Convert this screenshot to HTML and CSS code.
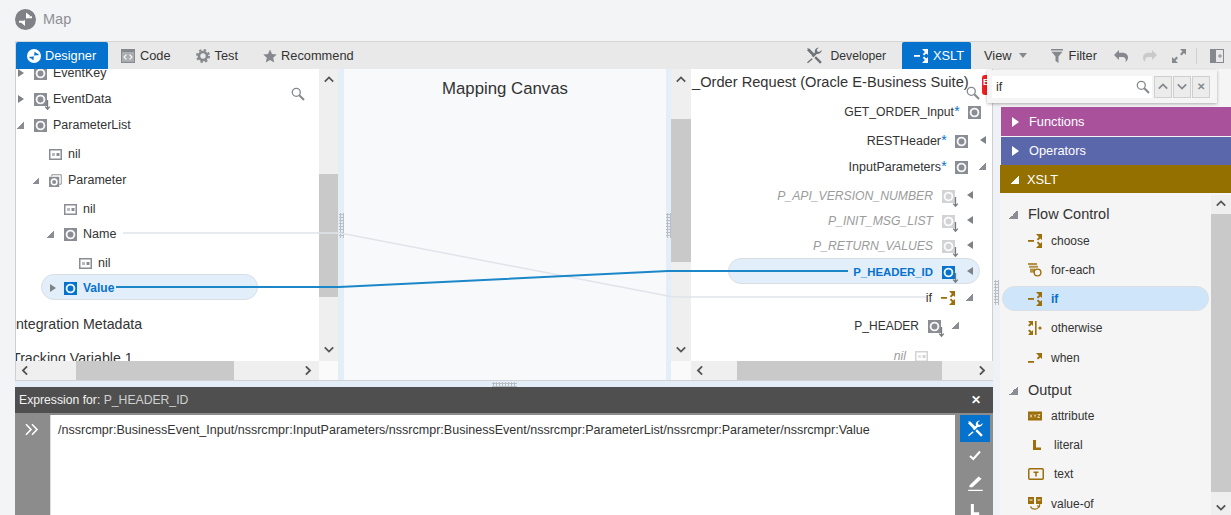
FILE: index.html
```html
<!DOCTYPE html>
<html lang="en">
<head>
<meta charset="utf-8">
<title>Map</title>
<link rel="stylesheet" href="styles.css">
</head>
<body>
<svg class="defs" width="0" height="0" aria-hidden="true">
  <symbol id="node" viewBox="0 0 13 13"><rect width="13" height="13" fill="currentColor"/><circle cx="6.5" cy="6.5" r="3.9" fill="none" stroke="#fff" stroke-width="1.9" opacity=".92"/></symbol>
  <symbol id="node-down" viewBox="0 0 18 19"><rect width="13" height="13" fill="currentColor"/><circle cx="6.5" cy="6.5" r="3.9" fill="none" stroke="#fff" stroke-width="1.9" opacity=".92"/><path d="M13.5 7v9M11.2 13.6l2.3 2.6 2.3-2.6" fill="none" stroke="#777b80" stroke-width="1.3"/></symbol>
  <symbol id="nil" viewBox="0 0 13 13"><rect x=".75" y="1.75" width="11.5" height="9.5" fill="#fff" stroke="currentColor" stroke-width="1.5"/><rect x="3" y="5" width="3" height="3" fill="currentColor" opacity=".6"/><rect x="7.5" y="5" width="3" height="3" fill="currentColor"/></symbol>
  <symbol id="param" viewBox="0 0 14 14"><path d="M3 2.5V.8h10.2V11H11" fill="none" stroke="#8a8d93"/><rect y="3" width="11" height="11" fill="#8a8d93"/><circle cx="5.5" cy="8.5" r="3" fill="none" stroke="#fff" stroke-width="1.7"/></symbol>
  <symbol id="cond" viewBox="0 0 14 14"><path d="M0 6h6v1.8H0z"/><path d="M8 0h6v6l-1.7-1.6-2.2 2.1-1.3-1.3 2.1-2.1z"/><path d="M8 14h6V8l-1.7 1.6-2.2-2.1-1.3 1.3 2.1 2.1z"/></symbol>
  <symbol id="when" viewBox="0 0 14 14"><path d="M0 10h6v1.8H0z"/><path d="M8 2h6v6l-1.7-1.6-2.2 2.1-1.3-1.3 2.1-2.1z"/></symbol>
  <symbol id="otherwise" viewBox="0 0 14 14"><path d="M0 0h5v5L3.6 3.6 1.6 5.6 0 4.2l2-2zM0 14h5V9L3.6 10.4 1.6 8.4 0 9.8l2 2z"/><path d="M7 0h1.6v14H7z"/><circle cx="12" cy="7" r="1.6"/></symbol>
  <symbol id="foreach" viewBox="0 0 14 14"><path d="M0 0h9v2H0zM1 2.8h9v2H1z" opacity=".75"/><path d="M2 5.6h5v4H2z" opacity=".75"/><circle cx="9.5" cy="9.5" r="3.4" fill="none" stroke="currentColor" stroke-width="1.4"/></symbol>
  <symbol id="xyz" viewBox="0 0 14 9"><rect width="14" height="9"/><path d="M2 3l2 3M4 3L2 6M6 3l1 1.5L8 3M7 4.5V6M9.6 3H12L9.6 6H12" fill="none" stroke="#f0e6c8" stroke-width=".8"/></symbol>
  <symbol id="literal" viewBox="0 0 8 10"><path d="M0 0h3v7.400h5V10H0z"/></symbol>
  <symbol id="textbox" viewBox="0 0 16 12"><rect x=".75" y=".75" width="14.5" height="10.500" rx="1" fill="none" stroke="currentColor" stroke-width="1.500"/><path d="M5.500 3.500h5V5H8.800v3.500H7.200V5H5.500z"/></symbol>
  <symbol id="valueof" viewBox="0 0 14 14"><path d="M0 0h6v7H0zM8 0h6v7H8z"/><path d="M1.500 3h3M9.500 3h3" stroke="#f5f5f5" stroke-width="1.200"/><path d="M2.500 9.500c1.500 3.500 6.500 3.500 8.500.5M9 8.800l2.400.8.400-2.400" fill="none" stroke="currentColor" stroke-width="1.200"/></symbol>
  <symbol id="chev" viewBox="0 0 10 7"><path d="M.8 5.600 5 1.400l4.200 4.200" fill="none" stroke="currentColor" stroke-width="1.800"/></symbol>
  <symbol id="glass" viewBox="0 0 14 14"><circle cx="5.300" cy="5.300" r="4" fill="#fff" stroke="currentColor" stroke-width="1.300"/><path d="M8.300 8.300l4.700 4.700" stroke="currentColor" stroke-width="2"/></symbol>
  <symbol id="tools" viewBox="0 0 17 17"><path d="M1 3.200 3 1.200l5.200 5.200-2 2z"/><path d="M1.500 1.500 3.500 3" stroke="currentColor" stroke-width="1"/><path d="M7.500 10.200 11 6.700c1.800.7 4.500-.6 4.800-3.600l-2.500 2-2-.5-.5-2 2.200-2C9.800.6 8.200 3.500 9 5.400L5.600 8.800z"/><path d="M10 9.300 15.800 15l-1.700 1.700-5.700-5.800zM5.700 11.300 1 15.300l.9.900 4.800-4z"/></symbol>
</svg>

<header class="pagehead">
  <svg class="map-logo" viewBox="0 0 21 21"><circle cx="10.500" cy="10.500" r="10.500" fill="#7f8186"/><path d="M4 12.800h5.500M11.500 8.200h5.500" stroke="#fff" stroke-width="2"/><path d="M11 3.500l4 3-4 3.200zM10 11l-4 2.600 4 3.400z" fill="#fff"/></svg>
  <h1 class="page-title">Map</h1>
</header>

<div class="workspace">
  <nav class="toolbar">
    <a class="tool tab active first"><svg class="tool-ic" viewBox="0 0 14 14"><circle cx="7" cy="7" r="7" fill="#fff"/><path d="M2.500 8.500h4M7.500 5.500h4" stroke="#0572ce" stroke-width="1.400"/><path d="M7.500 2.500l2.600 2.200L7.500 7zM6.500 7 4 9.200l2.500 2.200z" fill="#0572ce"/></svg>Designer</a>
    <a class="tool m-13"><svg class="tool-ic" viewBox="0 0 14 14"><path d="M0 0h14v14H0z" fill="#85888d"/><path d="M1 3h12v10H1z" fill="#f0f0f0" opacity=".35"/><path d="M5.500 5.500 3 8l2.500 2.500M8.500 5.500 11 8l-2.500 2.500" fill="none" stroke="#f4f4f4" stroke-width="1.200"/></svg>Code</a>
    <a class="tool m-25"><svg class="tool-ic" viewBox="0 0 14 14"><circle cx="7" cy="7" r="4" fill="none" stroke="#85888d" stroke-width="2.600"/><circle cx="7" cy="7" r="6" fill="none" stroke="#85888d" stroke-width="2" stroke-dasharray="2.400 2.312"/></svg>Test</a>
    <a class="tool m-25 tight"><svg class="tool-ic" viewBox="0 0 14 14"><path d="M7 .6l2 4.400 4.800.5-3.600 3.200 1 4.700L7 11l-4.200 2.400 1-4.700L.2 5.500 5 5z" fill="#85888d"/></svg>Recommend</a>
    <span class="toolbar-fill"></span>
    <a class="tool dev"><svg class="tool-ic wide" viewBox="0 0 17 17"><use href="#tools" class="ic-dev"/></svg>Developer</a>
    <a class="tool tab active m-16 xslt"><svg class="tool-ic" viewBox="0 0 14 14"><use href="#cond" class="ic-white"/></svg>XSLT</a>
    <a class="tool m-13">View<span class="caret"></span></a>
    <a class="tool m-24"><svg class="tool-ic small" viewBox="0 0 12 14"><path d="M0 0h12v1.600H0zM.5 2.800h11L7.500 7.500V14l-3-2V7.500z" fill="#85888d"/></svg>Filter</a>
    <button class="icon-btn m-17" aria-label="Undo"><svg viewBox="0 0 14 12"><path d="M5 0v2.800h3.500C12 2.800 14 5 14 7.500c0 2-1.200 3.500-2.500 4.500 .6-1.600.6-5-3-5H5v3L0 5z" fill="#85888d"/></svg></button>
    <button class="icon-btn m-15" aria-label="Redo"><svg viewBox="0 0 14 12"><path d="M9 0v2.800H5.500C2 2.800 0 5 0 7.500c0 2 1.200 3.500 2.500 4.500C1.900 10.400 1.900 7 5.500 7H9v3l5-5z" fill="#c9cacc"/></svg></button>
    <button class="icon-btn m-15" aria-label="Expand"><svg viewBox="0 0 14 14"><path d="M8 0h6v6l-2-2-2.500 2.500-1.500-1.500L10.500 2.500zM6 14H0V8l2 2 2.500-2.500L6 9 3.500 11.500z" fill="#85888d"/></svg></button>
    <span class="tool-divider"></span>
    <button class="icon-btn last" aria-label="Panel"><svg viewBox="0 0 14 14"><rect x=".5" y=".5" width="13" height="13" fill="none" stroke="#85888d"/><path d="M1 1h5v12H1z" fill="#85888d"/><path d="M8 7h4M10 5v4" stroke="#85888d"/></svg></button>
  </nav>

  <div class="columns">
    <div class="main-col">
      <div class="panels">
        <section class="panel panel-left">
          <div class="tree-view">
            <ul class="tree left-tree">
              <li class="row l0"><span class="twist right"></span><svg class="ic"><use href="#node"/></svg><span>EventKey</span></li>
              <li class="row l0"><span class="twist right"></span><svg class="ic ic-d"><use href="#node-down"/></svg><span>EventData</span></li>
              <li class="row l0"><span class="twist open"></span><svg class="ic"><use href="#node"/></svg><span>ParameterList</span></li>
              <li class="row l1"><span class="twist"></span><svg class="ic"><use href="#nil"/></svg><span>nil</span></li>
              <li class="row l1"><span class="twist open"></span><svg class="ic"><use href="#param"/></svg><span>Parameter</span></li>
              <li class="row l2"><span class="twist"></span><svg class="ic"><use href="#nil"/></svg><span>nil</span></li>
              <li class="row l2"><span class="twist open"></span><svg class="ic"><use href="#node"/></svg><span>Name</span></li>
              <li class="row l3"><span class="twist"></span><svg class="ic"><use href="#nil"/></svg><span>nil</span></li>
              <li class="row l2 pill-row"><span class="pill-left"><span class="twist right"></span><svg class="ic ic-blue"><use href="#node"/></svg><span class="sel">Value</span></span></li>
              <li class="row section-title">Integration Metadata</li>
              <li class="row section-title">Tracking Variable 1</li>
            </ul>
            <svg class="glass left-glass"><use href="#glass"/></svg>
          </div>
          <div class="vscroll">
            <div class="track t-left-a"><svg class="chev"><use href="#chev"/></svg></div>
            <div class="thumb t-left-b"></div>
            <div class="track t-left-c bottom"><svg class="chev down"><use href="#chev"/></svg></div>
          </div>
          <div class="hscroll">
            <div class="htrack h-left-a"><svg class="chev back"><use href="#chev"/></svg></div>
            <div class="hthumb h-left-b"></div>
            <div class="htrack h-fill end"><svg class="chev fwd"><use href="#chev"/></svg></div>
          </div>
          <div class="corner"></div>
        </section>

        <div class="vsplit"><span class="dots"></span></div>

        <section class="canvas"><h2 class="canvas-title">Mapping Canvas</h2></section>

        <div class="vsplit narrow"><span class="dots"></span></div>

        <section class="panel panel-right">
          <div class="vscroll">
            <div class="track t-right-a"><svg class="chev"><use href="#chev"/></svg></div>
            <div class="thumb t-right-b"></div>
            <div class="track t-right-c bottom"><svg class="chev down"><use href="#chev"/></svg></div>
          </div>
          <div class="tree-view">
            <ul class="tree right-tree">
              <li class="tree-title">_Order Request (Oracle E-Business Suite)</li>
              <li class="rrow r0"><span>GET_ORDER_Input</span><b class="req">*</b><svg class="ic"><use href="#node"/></svg></li>
              <li class="rrow r1"><span>RESTHeader</span><b class="req">*</b><svg class="ic"><use href="#node"/></svg><span class="rtwist left"></span></li>
              <li class="rrow r1"><span>InputParameters</span><b class="req">*</b><svg class="ic"><use href="#node"/></svg><span class="rtwist open"></span></li>
              <li class="rrow r2 muted"><span>P_API_VERSION_NUMBER</span><svg class="ic ic-d"><use href="#node-down"/></svg><span class="rtwist left"></span></li>
              <li class="rrow r2 muted"><span>P_INIT_MSG_LIST</span><svg class="ic ic-d"><use href="#node-down"/></svg><span class="rtwist left"></span></li>
              <li class="rrow r2 muted"><span>P_RETURN_VALUES</span><svg class="ic ic-d"><use href="#node-down"/></svg><span class="rtwist left"></span></li>
              <li class="rrow r2 pill-row"><span class="pill-right"><span class="sel">P_HEADER_ID</span><svg class="ic ic-d ic-blue"><use href="#node-down"/></svg><span class="rtwist left"></span></span></li>
              <li class="rrow r2"><span>if</span><svg class="ic ic-brown"><use href="#cond"/></svg><span class="rtwist open"></span></li>
              <li class="rrow r3"><span>P_HEADER</span><svg class="ic ic-d"><use href="#node-down"/></svg><span class="rtwist open"></span></li>
              <li class="rrow r4 muted"><span>nil</span><svg class="ic"><use href="#nil"/></svg><span class="rtwist"></span></li>
            </ul>
            <svg class="glass right-glass"><use href="#glass"/></svg>
          </div>
          <div class="corner"></div>
          <div class="hscroll">
            <div class="htrack h-right-a"><svg class="chev back"><use href="#chev"/></svg></div>
            <div class="hthumb h-right-b"></div>
            <div class="htrack h-fill end"><svg class="chev fwd"><use href="#chev"/></svg></div>
          </div>
        </section>

        <svg class="links" viewBox="0 0 978 312">
          <path d="M107 164H324L652 227Q656 228 662 228H910" fill="none" stroke="#e0e4ea" stroke-width="1.500"/>
          <path d="M100 218H323L652 202H832" fill="none" stroke="#1b87c9" stroke-width="2"/>
        </svg>
      </div>

      <div class="hsplit"><span class="dots flat"></span></div>

      <section class="expression">
        <header class="expr-head"><span>Expression for: <span class="expr-target">P_HEADER_ID</span></span><button class="expr-close" aria-label="Close">✕</button></header>
        <div class="expr-body">
          <div class="expr-side"><svg class="dbl" viewBox="0 0 14 12"><path d="M1 .8 6 6 1 11.200M7 .8 12 6 7 11.200" fill="none" stroke="#fff" stroke-width="1.600"/></svg></div>
          <div class="expr-editor">/nssrcmpr:BusinessEvent_Input/nssrcmpr:InputParameters/nssrcmpr:BusinessEvent/nssrcmpr:ParameterList/nssrcmpr:Parameter/nssrcmpr:Value</div>
          <div class="expr-tools">
            <button class="expr-tool on" aria-label="Tools"><svg class="et-ic"><use href="#tools"/></svg></button>
            <button class="expr-tool" aria-label="Apply"><svg class="et-ic sm" viewBox="0 0 12 10"><path d="M1 5.500 4.300 8.500 11 1" fill="none" stroke="#fff" stroke-width="2"/></svg></button>
            <button class="expr-tool" aria-label="Edit"><svg class="et-ic" viewBox="0 0 14 14"><path d="M2 9.500 9.500 2 12 4 4.500 11H2zM1 13h12v1H1z" fill="#fff"/></svg></button>
            <button class="expr-tool" aria-label="Literal"><svg class="et-ic sm" viewBox="0 0 8 10"><use href="#literal" class="ic-white"/></svg></button>
          </div>
        </div>
      </section>
    </div>

    <div class="vsplit palette-split"><span class="dots"></span></div>

    <aside class="palette">
      <div class="accordion acc-fn"><span class="acc-right"></span>Functions</div>
      <div class="accordion acc-op"><span class="acc-right"></span>Operators</div>
      <div class="accordion acc-xslt"><span class="acc-open"></span>XSLT</div>
      <div class="palette-body">
        <ul class="palette-list">
          <li class="pal-head"><span class="twist open"></span>Flow Control</li>
          <li class="pal-item"><svg class="pal-ic"><use href="#cond"/></svg>choose</li>
          <li class="pal-item"><svg class="pal-ic"><use href="#foreach"/></svg>for-each</li>
          <li class="pal-item pal-sel"><svg class="pal-ic"><use href="#cond"/></svg>if</li>
          <li class="pal-item"><svg class="pal-ic"><use href="#otherwise"/></svg>otherwise</li>
          <li class="pal-item"><svg class="pal-ic"><use href="#when"/></svg>when</li>
          <li class="pal-head"><span class="twist open"></span>Output</li>
          <li class="pal-item"><svg class="pal-ic"><use href="#xyz"/></svg>attribute</li>
          <li class="pal-item"><svg class="pal-ic literal-ic"><use href="#literal"/></svg>literal</li>
          <li class="pal-item"><svg class="pal-ic text-ic"><use href="#textbox"/></svg>text</li>
          <li class="pal-item"><svg class="pal-ic"><use href="#valueof"/></svg>value-of</li>
        </ul>
        <div class="vscroll pal-scroll">
          <div class="track t-pal-a"><svg class="chev"><use href="#chev"/></svg></div>
          <div class="thumb t-pal-b"></div>
          <div class="track t-pal-c bottom"><svg class="chev down"><use href="#chev"/></svg></div>
        </div>
      </div>
    </aside>
  </div>

  <span class="error-badge">E</span>
  <div class="search-pop">
    <div class="search-input"><span>if</span><svg class="glass-in"><use href="#glass"/></svg></div>
    <button class="search-btn" aria-label="Previous"><svg class="chev"><use href="#chev"/></svg></button>
    <button class="search-btn" aria-label="Next"><svg class="chev down"><use href="#chev"/></svg></button>
    <button class="search-btn close" aria-label="Close">✕</button>
  </div>
</div>
</body>
</html>
```

FILE: styles.css
```css
* { box-sizing: border-box; }
html, body { margin: 0; padding: 0; }
body {
  width: 1231px; height: 515px; overflow: hidden;
  background: #f3f4f6; color: #333;
  font-family: "Liberation Sans", Arial, sans-serif; font-size: 12.5px;
}
ul { list-style: none; margin: 0; padding: 0; }
button { border: 0; background: none; padding: 0; font: inherit; }
.defs { position: absolute; }

.pagehead { height: 41px; display: flex; align-items: center; padding: 0 0 3px 15px; }
.map-logo { width: 21px; height: 21px; }
.page-title { margin: 0 0 0 7px; font-size: 14.5px; font-weight: normal; color: #8d8f94; }

.workspace { position: relative; padding-left: 15px; }

.toolbar {
  height: 28px; display: flex; align-items: center; background: #e9e9e9;
  border-top: 1px solid #d6d6d6; border-left: 1px solid #d6d6d6;
  font-size: 12.800px; color: #333;
}
.toolbar-fill { flex: 1; }
.tool { display: flex; align-items: center; gap: 5px; white-space: nowrap; }
.tool.tight { gap: 4px; }
.tool.dev { font-size: 12.200px; }
.tab { height: 27px; border-radius: 2px 2px 0 0; }
.active { background: #0572ce; color: #fff; }
.first { width: 92px; padding-left: 11px; gap: 4px; }
.xslt { width: 69px; padding-left: 12px; }
.tool-ic { width: 14px; height: 14px; flex: none; }
.tool-ic.wide { width: 17px; height: 17px; margin-right: 2px; }
.tool-ic.small { width: 12px; margin-right: 1px; }
.ic-dev { color: #6f7276; fill: #6f7276; }
.ic-white { fill: #fff; color: #fff; }
.caret { width: 0; height: 0; margin-left: 2px; border: 4px solid transparent; border-top: 5px solid #85888d; border-bottom: 0; }
.m-13 { margin-left: 13px; }
.m-15 { margin-left: 15px; }
.m-16 { margin-left: 16px; }
.m-17 { margin-left: 17px; }
.m-24 { margin-left: 24px; }
.m-25 { margin-left: 25px; }
.icon-btn { width: 14px; height: 14px; display: block; }
.icon-btn svg { display: block; width: 14px; height: 14px; }
.tool-divider { width: 1px; height: 16px; background: #cfcfcf; margin: 0 13px 0 10px; }
.last { margin-right: 7px; }

.columns { display: flex; height: 446px; }
.main-col { width: 978px; flex: none; display: flex; flex-direction: column; }

.panels { position: relative; display: flex; height: 312px; border-left: 1px solid #cfcfcf; border-bottom: 1px solid #cfd3d8; }
.panel { display: grid; height: 311px; background: #fff; }
.panel-left { width: 322px; grid-template-columns: 303px 19px; grid-template-rows: 292px 19px; }
.panel-right { width: 322px; flex: none; grid-template-columns: 20px 302px; grid-template-rows: 292px 19px; border-right: 1px solid #cfcfcf; }

.vsplit { width: 6px; flex: none; background: #e4eef9; display: flex; flex-direction: column; align-items: center; padding-top: 144px; }
.vsplit.narrow { width: 5px; }
.palette-split { width: 7px; background: #eef1f5; padding-top: 211px; }
.dots {
  display: block; width: 5px; height: 25px;
  background-image: radial-gradient(circle, #b9bec5 1px, transparent 1.100px);
  background-size: 3px 3px;
}
.dots.flat { width: 25px; height: 5px; }
.hsplit { height: 6px; background: #e4eef9; display: flex; justify-content: center; align-items: center; flex: none; }

.canvas { flex: 1; background: #f8f9fa; }
.canvas-title { margin: 0; padding-top: 10px; text-align: center; font-size: 16.800px; line-height: 19px; font-weight: normal; }

.links { position: absolute; left: 0; top: 0; width: 978px; height: 312px; pointer-events: none; }

.tree-view { position: relative; overflow: hidden; }
.tree { color: #333; }
.left-tree {
  display: grid; margin-top: -4px;
  grid-template-rows: 26px 26px 29px 26px 29px 25px 29px 26px 35px 34px 16px;
}
.row { display: flex; align-items: center; align-self: start; height: 16px; white-space: nowrap; }
.l0 { padding-left: 0; }
.l1 { padding-left: 15px; }
.l2 { padding-left: 30px; }
.l3 { padding-left: 45px; }
.twist { width: 18px; height: 8px; flex: none; position: relative; }
.twist.right::before { content: ""; position: absolute; left: 2px; top: 0; border: 4px solid transparent; border-left: 6px solid #7f8388; border-right: 0; }
.twist.open::before { content: ""; position: absolute; left: 1px; top: 1px; width: 7px; height: 7px; background: linear-gradient(135deg, transparent 50%, #8a8d93 50%); }
.ic { width: 13px; height: 13px; flex: none; color: #8a8d93; margin-right: 6px; overflow: visible; }
.ic-d { width: 18px; height: 19px; margin-right: 1px; margin-top: 6px; }
.ic-blue { color: #0572ce; }
.ic-brown { fill: #9c6f0b; width: 14px; height: 14px; }
.pill-left {
  display: flex; align-items: center; height: 26px; width: 217px; flex: none;
  margin: -4px 0 0 -5px; padding: 2px 0 0 5px;
  background: #e2eef9; border: 1px solid #d9dee4; border-radius: 13px;
}
.pill-left .twist { margin-left: 1px; }
.pill-left .ic { margin-left: -2px; }
.sel { color: #0572ce; font-weight: bold; font-size: 12px; }
.section-title { margin-left: -4px; font-size: 14.200px; }

.glass { position: absolute; width: 14px; height: 14px; color: #85888d; }
.left-glass { left: 275px; top: 18px; }
.right-glass { left: 275px; top: 17px; }

.right-tree {
  display: grid;
  grid-template-rows: 35px 29px 26px 29px 25px 25px 27px 25px 28px 30px 16px;
}
.tree-title { font-size: 14.650px; height: 26px; align-self: start; display: flex; align-items: center; padding-left: 1px; white-space: nowrap; }
.rrow { display: flex; align-items: center; justify-content: flex-end; align-self: start; height: 16px; white-space: nowrap; }
.rrow .ic { margin: 0 0 0 9px; }
.rrow .ic-d { margin: 6px -5px 0 9px; }
.r0 { padding-right: 12px; font-size: 12.200px; }
.r1 { padding-right: 7px; }
.r2 { padding-right: 20px; }
.r3 { padding-right: 34px; font-size: 12px; }
.r4 { padding-right: 47px; }
.req { width: 6px; text-align: center; color: #0572ce; font-weight: normal; font-size: 14px; align-self: center; margin-top: -3px; }
.req + .ic { margin-left: 8px; }
.muted { color: #9b9b9b; font-style: italic; font-size: 12.200px; }
.muted .ic { color: #d2d3d5; }
.rtwist { width: 18px; height: 10px; flex: none; position: relative; }
.rtwist.left::before { content: ""; position: absolute; right: 0; top: 0; border: 4.500px solid transparent; border-right: 6px solid #7f8388; border-left: 0; }
.rtwist.open::before { content: ""; position: absolute; right: 0; top: 1px; width: 7px; height: 7px; background: linear-gradient(225deg, transparent 50%, #8a8d93 50%); transform: rotate(-90deg); }
.pill-right {
  display: flex; align-items: center; justify-content: flex-end; flex: none;
  width: 252px; height: 26px; margin: -4px -7px 0 0; padding: 2px 6px 0 0;
  background: #e2eef9; border: 1px solid #d9dee4; border-radius: 13px;
}
.pill-right .sel { font-size: 11.400px; }

.vscroll { display: flex; flex-direction: column; background: #efefef; }
.track { position: relative; flex: none; overflow: hidden; }
.thumb { flex: none; background: #c9c9c9; }
.chev { display: block; width: 10px; height: 7px; color: #555; margin: 7px auto 0; }
.chev.down { transform: rotate(180deg); margin-top: 0; }
.chev.back { transform: rotate(-90deg); margin: 0; }
.chev.fwd { transform: rotate(90deg); margin: 0; }
.track.bottom { display: flex; flex-direction: column; justify-content: flex-end; padding-bottom: 8px; }
.t-left-a { height: 105px; }
.t-left-b { height: 123px; }
.t-left-c { height: 64px; }
.t-right-a { height: 50px; }
.t-right-b { height: 143px; }
.t-right-c { height: 99px; }
.t-pal-a { height: 19px; }
.t-pal-b { height: 278px; }
.t-pal-c { height: 23px; }
.t-pal-a .chev { margin-top: 5px; }
.track.t-pal-c { padding-bottom: 4px; }
.pal-scroll { width: 20px; flex: none; }

.hscroll { display: flex; background: #efefef; }
.htrack { flex: none; display: flex; align-items: center; padding-left: 4px; }
.hthumb { flex: none; background: #c9c9c9; }
.h-fill { flex: 1; }
.end { justify-content: flex-end; padding: 0 6px 0 0; }
.h-left-a { width: 60px; }
.h-left-b { width: 158px; }
.h-right-a { width: 46px; }
.h-right-b { width: 205px; }
.corner { background: #fafafa; }

.expression { flex: 1; display: flex; flex-direction: column; overflow: hidden; }
.expr-head {
  height: 26px; flex: none; background: #4f4f4f; color: #f2f2f2;
  display: flex; align-items: center; justify-content: space-between;
  padding: 0 12px 0 4px; font-size: 12.200px;
}
.expr-target { color: #cfcfcf; }
.expr-close { color: #fff; font-size: 12px; font-weight: bold; }
.expr-body { flex: 1; display: flex; background: #8c8c8c; padding-top: 2px; }
.expr-side { width: 35px; flex: none; padding: 8px 0 0 10px; }
.dbl { display: block; width: 14px; height: 13px; }
.expr-editor { flex: 1; background: #fff; border-left: 1px solid #ddd; padding: 8px 7px; font-size: 12.540px; white-space: nowrap; }
.expr-tools { width: 38px; flex: none; display: flex; flex-direction: column; padding-left: 5px; }
.expr-tool { width: 30px; height: 27px; flex: none; display: flex; align-items: center; justify-content: center; color: #fff; fill: #fff; }
.expr-tool.on { background: #0572ce; }
.et-ic { width: 17px; height: 17px; color: #fff; fill: #fff; display: block; }
.et-ic.sm { width: 12px; height: 11px; }

.palette { flex: 1; display: flex; flex-direction: column; background: #f5f5f5; }
.accordion { height: 28px; flex: none; display: flex; align-items: center; color: #fff; font-size: 12.800px; padding-left: 11px; margin-left: 1px; }
.acc-fn { background: #a9519b; margin-top: 38px; height: 29px; }
.acc-op { background: #5b67ab; margin-top: 1px; padding-bottom: 1px; }
.acc-xslt { background: #947000; margin-left: 0; padding-left: 10px; margin-bottom: 2px; }
.acc-right { width: 0; height: 0; margin-right: 10px; border: 5px solid transparent; border-left: 7px solid #fff; border-right: 0; }
.acc-open { width: 9px; height: 9px; margin-right: 8px; background: linear-gradient(135deg, transparent 50%, #fff 50%); }
.palette-body { flex: 1; display: flex; min-height: 0; }
.palette-list {
  flex: 1; display: grid; padding-top: 11px; overflow: hidden;
  grid-template-rows: 27px 29px 28px 30px 30px 32px 26px 29px 29px 30px 16px;
}
.pal-head { display: flex; align-items: center; align-self: start; height: 16px; font-size: 14.500px; padding-left: 9px; color: #333; }
.pal-head .twist { width: 19px; height: 9px; }
.pal-head .twist.open::before { left: 0; top: 0; width: 9px; height: 9px; }
.pal-item { display: flex; align-items: center; align-self: start; height: 16px; padding-left: 28px; font-size: 12px; color: #333; }
.pal-ic { width: 14px; height: 14px; flex: none; margin-right: 9px; fill: #9c6f0b; color: #9c6f0b; }
.literal-ic { width: 8px; height: 10px; margin: 0 13px 0 5px; }
.text-ic { width: 16px; height: 12px; margin-right: 10px; }
.pal-sel { height: 25px; margin: -4px 2px 0 2px; padding-left: 25px; background: #cfe5f9; border: 1px solid #dbdfe4; border-radius: 13px; color: #0572ce; font-weight: bold; }

.error-badge {
  position: absolute; left: 982px; top: 34px; width: 10px; height: 20px;
  background: #f02020; color: #fff; font-size: 9px; font-weight: bold; line-height: 14px;
  padding-left: 1px; border-radius: 3px 0 0 3px;
}
.search-pop {
  position: absolute; left: 987px; top: 29px; width: 230px; height: 33px;
  display: flex; align-items: center; gap: 1px; padding: 0 7px 0 5px;
  background: #f5f5f5; box-shadow: 0 1px 3px rgba(0,0,0,.3);
}
.search-input {
  width: 162px; height: 22px; background: #fff; display: flex; align-items: center;
  justify-content: space-between; padding: 0 2px 0 4px; font-size: 12.500px; margin-right: 1px;
}
.glass-in { width: 14px; height: 14px; color: #85888d; }
.search-btn { width: 18px; height: 22px; flex: none; background: #ececec; border: 1px solid #cfcfcf; display: flex; align-items: center; justify-content: center; }
.search-btn .chev { margin: 0; color: #85888d; }
.search-btn.close { color: #85888d; font-size: 10px; font-weight: bold; }
```
